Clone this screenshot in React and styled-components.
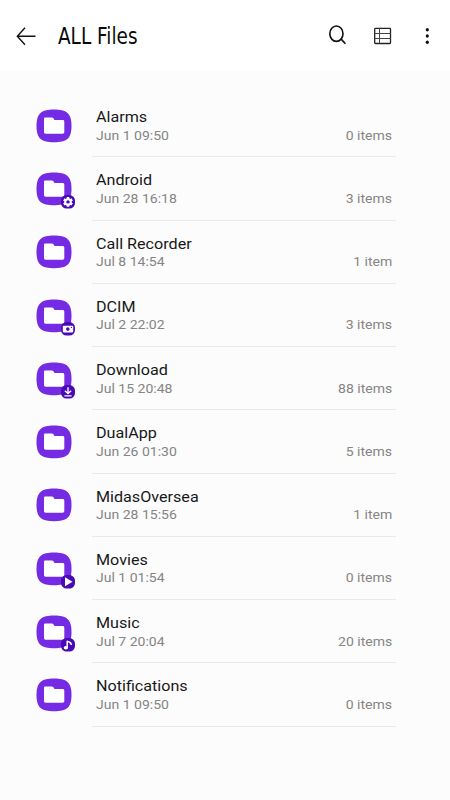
import React from 'react';
import styled, { createGlobalStyle } from 'styled-components';

const GlobalStyle = createGlobalStyle`
  * {
    box-sizing: border-box;
  }

  body {
    margin: 0;
    background: #fcfcfc;
    font-family: Roboto, sans-serif;
  }
`;

const Page = styled.div`
  width: 450px;
  height: 800px;
  overflow: hidden;
  background: #fcfcfc;
`;

const Header = styled.header`
  display: flex;
  align-items: center;
  height: 71px;
  padding: 0 11px 0 16px;
  background: #fff;
`;

const IconButton = styled.button`
  display: flex;
  flex: none;
  width: 20px;
  height: 22px;
  margin-left: ${props => props.$gap || 0}px;
  padding: 0;
  border: 0;
  background: none;
  cursor: pointer;
`;

const Title = styled.h1`
  flex: 1;
  margin: 0 0 0 22px;
  color: #0a0a0a;
  font-family: 'DejaVu Sans', sans-serif;
  font-size: 22.5px;
  font-weight: 400;
  line-height: 30px;
  white-space: nowrap;
  transform: scaleX(0.82);
  transform-origin: left center;
`;

const FileList = styled.ul`
  margin: 0;
  padding: 23px 54px 0 36px;
  list-style: none;
`;

const FileRow = styled.li`
  display: flex;
  height: 63.25px;
`;

const FolderTile = styled.div`
  position: relative;
  flex: none;
  width: 36px;
  height: 34px;
  margin: 14.8px 20px 0 0;
`;

const Badge = styled.svg`
  position: absolute;
  left: 25.2px;
  top: 23px;
`;

const Details = styled.div`
  flex: 1;
  padding: 14px 4px 0;
  border-bottom: 1px solid #e9e9e9;
`;

const FileName = styled.div`
  color: #181818;
  font-size: 15px;
  line-height: 18.5px;
  transform: scaleX(1.075);
  transform-origin: left center;
`;

const Meta = styled.div`
  display: flex;
  justify-content: space-between;
  color: #858585;
  font-size: 13px;
  line-height: 18px;
`;

const MetaText = styled.span`
  transform: scaleX(1.078);
  transform-origin: ${props => (props.$end ? 'right' : 'left')} center;
`;

const badges = {
  settings: (
    <>
      <g stroke="#fff" strokeWidth="2.6">
        <path d="M7 2v9.8M2.8 4.5l8.4 4.8M2.8 9.3l8.4-4.8" />
      </g>
      <circle cx="7" cy="6.9" r="3.7" fill="#fff" />
      <circle cx="7" cy="6.9" r="1.7" fill="#4909b5" />
    </>
  ),
  camera: (
    <>
      <rect x="1.8" y="3.8" width="10.4" height="6.6" rx="0.8" fill="#fff" />
      <circle cx="6.8" cy="7.1" r="1.8" fill="#4909b5" />
      <circle cx="10.4" cy="5.4" r="0.6" fill="#4909b5" />
    </>
  ),
  download: (
    <path
      d="M7 2.2v6.3M3.9 5.7L7 8.6l3.1-2.9M3.4 10.9h7.2"
      fill="none"
      stroke="#fff"
      strokeWidth="1.4"
    />
  ),
  play: <path d="M4 2.3v9L11.5 6.8z" fill="#fff" />,
  music: (
    <>
      <path d="M6.2 9.8V2.8c1 1.9 4.2.6 4.1 4.3" fill="none" stroke="#fff" strokeWidth="1.5" />
      <ellipse cx="4.9" cy="9.7" rx="2.2" ry="1.8" fill="#fff" />
    </>
  ),
};

const files = [
  { name: 'Alarms', date: 'Jun 1 09:50', count: '0 items' },
  { name: 'Android', date: 'Jun 28 16:18', count: '3 items', badge: 'settings' },
  { name: 'Call Recorder', date: 'Jul 8 14:54', count: '1 item' },
  { name: 'DCIM', date: 'Jul 2 22:02', count: '3 items', badge: 'camera' },
  { name: 'Download', date: 'Jul 15 20:48', count: '88 items', badge: 'download' },
  { name: 'DualApp', date: 'Jun 26 01:30', count: '5 items' },
  { name: 'MidasOversea', date: 'Jun 28 15:56', count: '1 item' },
  { name: 'Movies', date: 'Jul 1 01:54', count: '0 items', badge: 'play' },
  { name: 'Music', date: 'Jul 7 20:04', count: '20 items', badge: 'music' },
  { name: 'Notifications', date: 'Jun 1 09:50', count: '0 items' },
];

const FolderIcon = ({ badge }) => (
  <FolderTile>
    <svg width="36" height="34" viewBox="0 0 36 34">
      <path
        d="M18 .5C30.5.5 35.5 4.2 35.5 17S30.5 33.2 18 33.2.5 29.8.5 17 5.5.5 18 .5z"
        fill="#752be3"
      />
      <path
        d="M9.3 8.4h6.6c.6 0 1 .2 1.3.7l1.3 2h8c1.2 0 1.8.6 1.8 1.7v10.3c0 1.1-.6 1.7-1.7 1.7H9.7c-1.1 0-1.7-.6-1.7-1.7V9.8c0-.9.5-1.4 1.3-1.4z"
        fill="#fff"
      />
    </svg>
    {badge && (
      <Badge width="14" height="14" viewBox="0 0 14 14">
        <rect width="14" height="13.6" rx="5.6" fill="#4909b5" />
        {badges[badge]}
      </Badge>
    )}
  </FolderTile>
);

const App = () => (
  <Page>
    <GlobalStyle />
    <Header>
      <IconButton aria-label="Back">
        <svg width="20" height="22" viewBox="0 0 20 22" fill="none" stroke="#111" strokeWidth="1.4">
          <path d="M19.5 11.3H1.5M9 2.8L1.3 11.3 9 19.8" />
        </svg>
      </IconButton>
      <Title>ALL Files</Title>
      <IconButton aria-label="Search">
        <svg width="20" height="22" viewBox="0 0 20 22" fill="none" stroke="#111" strokeWidth="1.6">
          <ellipse cx="7.4" cy="8.7" rx="6.6" ry="7.7" />
          <path d="M12.2 14.1l4.2 4.7" />
        </svg>
      </IconButton>
      <IconButton aria-label="Change view" $gap={25}>
        <svg width="20" height="22" viewBox="0 0 20 22" fill="none" stroke="#444" strokeWidth="1">
          <rect x=".7" y="3.3" width="15.8" height="15.2" rx=".8" stroke="#222" strokeWidth="1.3" />
          <path d="M5.5 3.3v15.2M.7 8.5h15.8M.7 13.5h15.8" />
        </svg>
      </IconButton>
      <IconButton aria-label="More options" $gap={25}>
        <svg width="20" height="22" viewBox="0 0 20 22" fill="#111">
          <ellipse cx="8.3" cy="4.8" rx="1.6" ry="1.8" />
          <ellipse cx="8.3" cy="11" rx="1.6" ry="1.8" />
          <ellipse cx="8.3" cy="17.2" rx="1.6" ry="1.8" />
        </svg>
      </IconButton>
    </Header>
    <FileList>
      {files.map(file => (
        <FileRow key={file.name}>
          <FolderIcon badge={file.badge} />
          <Details>
            <FileName>{file.name}</FileName>
            <Meta>
              <MetaText>{file.date}</MetaText>
              <MetaText $end>{file.count}</MetaText>
            </Meta>
          </Details>
        </FileRow>
      ))}
    </FileList>
  </Page>
);

export default App;
